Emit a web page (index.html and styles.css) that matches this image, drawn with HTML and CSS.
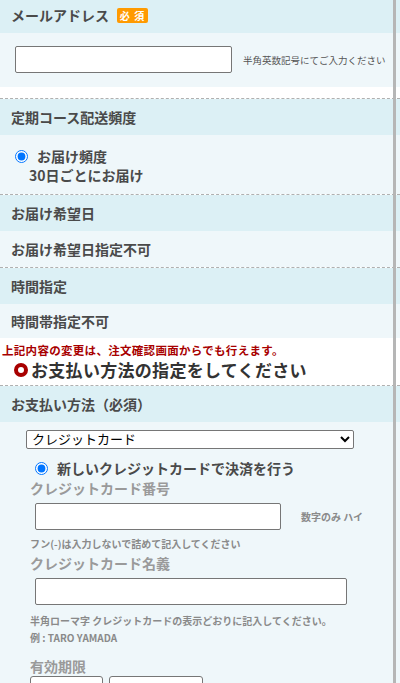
FILE: index.html
```html
<!DOCTYPE html>
<html>
<head>
<meta charset="utf-8">
<link rel="stylesheet" href="styles.css">
</head>
<body>
<div class="page">

  <div class="sec">
    <div class="sec_head">メールアドレス<span class="badge">必 須</span></div>
    <div class="mail_body">
      <input type="text" class="txt mail_txt">
      <span class="note_s">半角英数記号にてご入力ください</span>
    </div>
  </div>
  <div class="sp_11"></div>

  <div class="sec dash">
    <div class="sec_head">定期コース配送頻度</div>
    <div class="freq_body">
      <label class="freq_row"><input type="radio" class="rd" checked>お届け頻度</label>
      <div class="freq_val">30日ごとにお届け</div>
    </div>
  </div>

  <div class="sec dash">
    <div class="sec_head">お届け希望日</div>
    <div class="sec_body">お届け希望日指定不可</div>
  </div>

  <div class="sec dash">
    <div class="sec_head">時間指定</div>
    <div class="sec_body short">時間帯指定不可</div>
  </div>

  <div class="notice">
    <div class="red">上記内容の変更は、注文確認画面からでも行えます。</div>
    <div class="pay_title"><span class="ring"></span>お支払い方法の指定をしてください</div>
  </div>

  <div class="sec dash">
    <div class="sec_head">お支払い方法（必須）</div>
    <div class="pay_body">
      <select class="pay_sel">
        <option>クレジットカード</option>
        <option>代金引換</option>
      </select>
      <label class="new_card"><input type="radio" class="rd" checked>新しいクレジットカードで決済を行う</label>

      <div class="lab">クレジットカード番号</div>
      <div class="in_row">
        <input type="text" class="txt card_no">
        <span class="note">数字のみ ハイ</span>
      </div>
      <div class="note note_line">フン(-)は入力しないで詰めて記入してください</div>

      <div class="lab lab2">クレジットカード名義</div>
      <div class="in_row"><input type="text" class="txt card_name"></div>
      <div class="note note_tall first">半角ローマ字 クレジットカードの表示どおりに記入してください。</div>
      <div class="note note_tall">例 : TARO YAMADA</div>

      <div class="lab lab3">有効期限</div>
      <div class="exp_row">
        <select class="exp_sel mon"><option></option></select>
        <select class="exp_sel yr"><option></option></select>
      </div>
    </div>
  </div>

</div>
</body>
</html>
```

FILE: styles.css
```css
body
{
  margin:0;
  background-color:#fff;
  font-family:"Noto Sans CJK JP", sans-serif;
  color:#4a4a4a;
  overflow:hidden;
}
.page
{
  position:relative;
  margin-top:-3px;
}
/* frame edge on the right */
.page:after
{
  content:"";
  position:absolute;
  left:393px;
  top:0;
  bottom:0;
  width:3px;
  background-color:#b6b6b6;
}
.dash
{
  border-top:1px dashed #b0b0b0;
}
.sec_head
{
  height:36px;
  padding-left:11px;
  display:flex;
  align-items:center;
  background-color:#dcf0f5;
  font-size:14px;
  font-weight:bold;
}
.badge
{
  margin-left:8px;
  width:31px;
  height:15px;
  line-height:15px;
  border-radius:2px;
  background-color:#ff9a00;
  color:#fff;
  font-size:10px;
  text-align:center;
  letter-spacing:1px;
}
.sec_body
{
  height:36px;
  padding-left:11px;
  display:flex;
  align-items:center;
  background-color:#eff7fa;
  font-size:14px;
  font-weight:bold;
}
.short
{
  height:34px;
}
.sp_11
{
  height:11px;
}
.mail_body
{
  display:flex;
  align-items:center;
  padding:13px 0 14px 15px;
  background-color:#eff7fa;
}
.txt
{
  box-sizing:border-box;
  height:27px;
  margin:0;
  border:1px solid #767676;
  border-radius:2px;
  background-color:#fff;
}
.mail_txt
{
  width:217px;
}
.note_s
{
  margin-left:11px;
  font-size:9.5px;
  color:#555;
}
.freq_body
{
  padding:12px 0 9px 0;
  background-color:#eff7fa;
  font-size:14px;
  font-weight:bold;
  line-height:19px;
}
.freq_row
{
  display:flex;
  align-items:center;
  padding-left:15px;
}
.rd
{
  width:13px;
  height:13px;
  margin:0 9px 0 0;
}
.freq_val
{
  padding-left:29px;
}
.notice
{
  padding:4px 0;
}
.red
{
  padding-left:2px;
  font-size:11.5px;
  line-height:16px;
  font-weight:bold;
  letter-spacing:0.3px;
  color:#a80000;
}
.pay_title
{
  display:flex;
  align-items:center;
  margin-top:1px;
  padding-left:14px;
  font-size:17px;
  line-height:22px;
  font-weight:bold;
  letter-spacing:0.3px;
  color:#333;
}
.ring
{
  box-sizing:border-box;
  width:14px;
  height:14px;
  margin-right:3px;
  border:4px solid #a80000;
  border-radius:50%;
  background-color:#fff;
}
.pay_body
{
  padding:8px 0 20px 30px;
  background-color:#eff7fa;
}
.pay_sel
{
  display:block;
  box-sizing:border-box;
  width:328px;
  height:19px;
  margin:0 0 0 -4px;
  padding:0 1px;
  border:1px solid #767676;
  border-radius:2px;
  background-color:#fff;
  font-family:"Liberation Sans", "Noto Sans CJK JP", sans-serif;
  font-size:13px;
  line-height:15px;
  color:#000;
}
.new_card
{
  display:flex;
  align-items:center;
  margin-top:9px;
  padding-left:5px;
  font-size:14px;
  line-height:20px;
  font-weight:bold;
}
.lab
{
  font-size:14px;
  line-height:20px;
  font-weight:bold;
  color:#9a9a9a;
}
.lab2
{
  margin-top:2px;
}
.lab3
{
  margin-top:10px;
}
.in_row
{
  display:flex;
  align-items:center;
  margin-top:5px;
  padding-left:5px;
}
.card_no
{
  width:246px;
}
.card_name
{
  width:312px;
}
.note
{
  font-size:10px;
  font-weight:bold;
  color:#8a8a8a;
}
.in_row .note
{
  margin-left:20px;
}
.note_line
{
  margin-top:7px;
  line-height:14px;
}
.note_tall
{
  line-height:17px;
}
.first
{
  margin-top:7px;
}
.exp_row
{
  display:flex;
  gap:6px;
}
.exp_sel
{
  box-sizing:border-box;
  height:24px;
  margin:0;
  border:1px solid #767676;
  border-radius:3px;
  background-color:#fff;
}
.mon
{
  width:73px;
}
.yr
{
  width:94px;
}
```
